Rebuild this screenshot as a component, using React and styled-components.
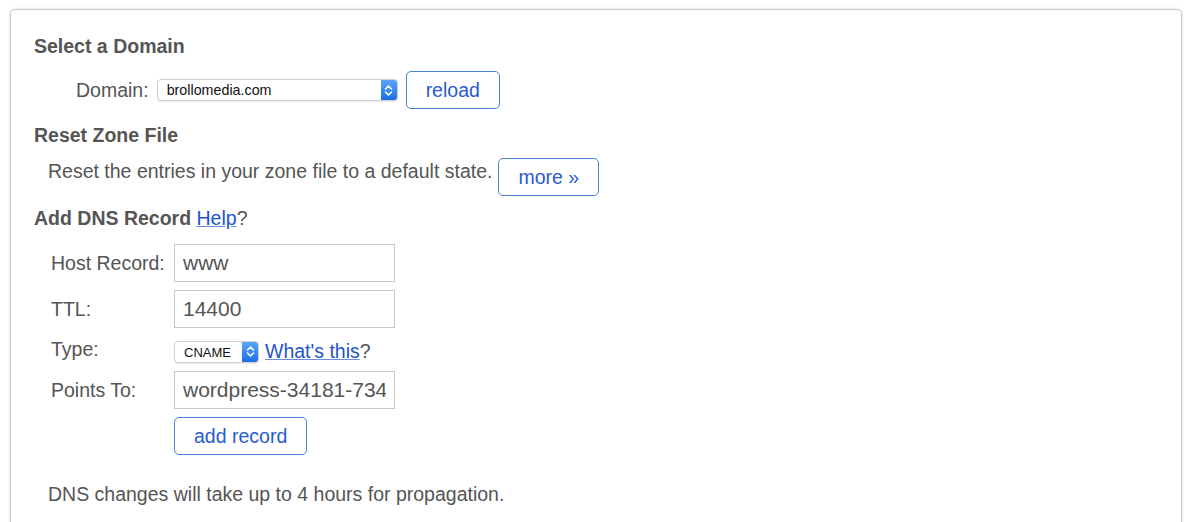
import React from 'react'
import styled, { createGlobalStyle } from 'styled-components'

const GlobalStyle = createGlobalStyle`
    body {
        margin: 0;
        background: #fff;
        font-family: "Liberation Sans", Arial, Helvetica, sans-serif;
        color: #555;
        overflow: hidden;
    }
`

const Chevrons = () => (
    <svg width="9" height="13" viewBox="0 0 9 13" fill="none">
        <path d="M1.5 5L4.5 2L7.5 5" stroke="#fff" strokeWidth="1.6" strokeLinecap="round" strokeLinejoin="round" />
        <path d="M1.5 8L4.5 11L7.5 8" stroke="#fff" strokeWidth="1.6" strokeLinecap="round" strokeLinejoin="round" />
    </svg>
)

const FakeSelect = ({ value, width, size }) => (
    <SelectBox $width={width}>
        <SelectValue $size={size}>{value}</SelectValue>
        <SelectArrow>
            <Chevrons />
        </SelectArrow>
    </SelectBox>
)

const App = () => {
    return (
        <>
            <GlobalStyle />
            <Panel>
                <Heading>Select a Domain</Heading>
                <DomainRow>
                    <Label>Domain:</Label>
                    <FakeSelect value="brollomedia.com" width={241} size={14.3} />
                    <Button>reload</Button>
                </DomainRow>

                <Heading $top={15}>Reset Zone File</Heading>
                <ResetRow>
                    <Text>Reset the entries in your zone file to a default state.</Text>
                    <Button>more »</Button>
                </ResetRow>

                <Heading $top={11}>
                    Add DNS Record{' '}
                    <Link href="#">Help</Link>
                    <Normal>?</Normal>
                </Heading>

                <FormGrid>
                    <FieldLabel>Host Record:</FieldLabel>
                    <Input defaultValue="www" />

                    <FieldLabel>TTL:</FieldLabel>
                    <Input defaultValue="14400" />

                    <FieldLabel>Type:</FieldLabel>
                    <TypeCell>
                        <FakeSelect value="CNAME" width={85} size={13} />
                        <Link href="#">What's this</Link>?
                    </TypeCell>

                    <FieldLabel>Points To:</FieldLabel>
                    <Input defaultValue="wordpress-34181-7341.bitnamiapp.com" />

                    <span />
                    <ButtonCell>
                        <Button>add record</Button>
                    </ButtonCell>
                </FormGrid>

                <Note>DNS changes will take up to 4 hours for propagation.</Note>
            </Panel>
        </>
    )
}

export default App

const Panel = styled.div`
    margin: 9px 0 0 10px;
    width: 1172px;
    height: 520px;
    box-sizing: border-box;
    border: 1px solid #c9c9c9;
    border-radius: 5px;
    box-shadow: 0 0 3px rgba(0, 0, 0, 0.15);
    padding: 25px 0 0 23px;
`

const Heading = styled.h3`
    margin: ${(p) => p.$top || 0}px 0 0 0;
    font-size: 19.5px;
    line-height: 22px;
    font-weight: 700;
    color: #555;
`

const Normal = styled.span`
    font-weight: 400;
`

const Link = styled.a`
    font-weight: 400;
    color: #2255cc;
    text-decoration: underline;
    text-decoration-color: #6a8fd8;
`

const DomainRow = styled.div`
    display: flex;
    align-items: center;
    gap: 8px;
    margin-top: 14px;
    padding-left: 42px;
`

const Label = styled.span`
    font-size: 19.5px;
    color: #555;
`

const SelectBox = styled.div`
    display: flex;
    align-items: stretch;
    width: ${(p) => p.$width}px;
    height: 22px;
    box-sizing: border-box;
    border: 1px solid #d0d0d0;
    border-radius: 4px;
    background: #fff;
    box-shadow: 0 1px 1px rgba(0, 0, 0, 0.08);
    overflow: hidden;
    flex-shrink: 0;
`

const SelectValue = styled.span`
    flex: 1;
    font-size: ${(p) => p.$size}px;
    line-height: 21px;
    color: #111;
    padding-left: 9px;
    white-space: nowrap;
`

const SelectArrow = styled.span`
    width: 16px;
    display: flex;
    align-items: center;
    justify-content: center;
    background: linear-gradient(#5aa5f8, #1d6ee8);
`

const Button = styled.button`
    height: 38px;
    padding: 0 19px;
    box-sizing: border-box;
    background: #fff;
    border: 1px solid #4a7fd6;
    border-radius: 5px;
    font-family: inherit;
    font-size: 19.5px;
    color: #2a5ad0;
    cursor: pointer;
    flex-shrink: 0;
`

const ResetRow = styled.div`
    display: flex;
    align-items: flex-start;
    gap: 6px;
    margin-top: 12px;
    padding-left: 14px;
`

const Text = styled.span`
    font-size: 19.5px;
    line-height: 22px;
    margin-top: 2px;
    color: #555;
`

const FormGrid = styled.div`
    display: grid;
    grid-template-columns: 123px 221px;
    grid-template-rows: 38px 38px 27px 38px 38px;
    row-gap: 8px;
    align-items: center;
    margin-top: 15px;
    padding-left: 17px;
`

const FieldLabel = styled.span`
    font-size: 19.5px;
    color: #555;
`

const Input = styled.input`
    width: 221px;
    height: 38px;
    box-sizing: border-box;
    border: 1px solid #c8c8c8;
    border-radius: 0;
    padding: 0 8px;
    font-family: inherit;
    font-size: 21px;
    color: #555;
    outline: none;
`

const TypeCell = styled.div`
    display: flex;
    align-items: center;
    gap: 6px;
    font-size: 19.5px;
    white-space: nowrap;
    margin-top: 4px;

    & > a {
        margin-right: -6px;
    }
`

const ButtonCell = styled.div`
    display: flex;
`

const Note = styled.p`
    margin: 28px 0 0 14px;
    font-size: 19.5px;
    color: #555;
`
